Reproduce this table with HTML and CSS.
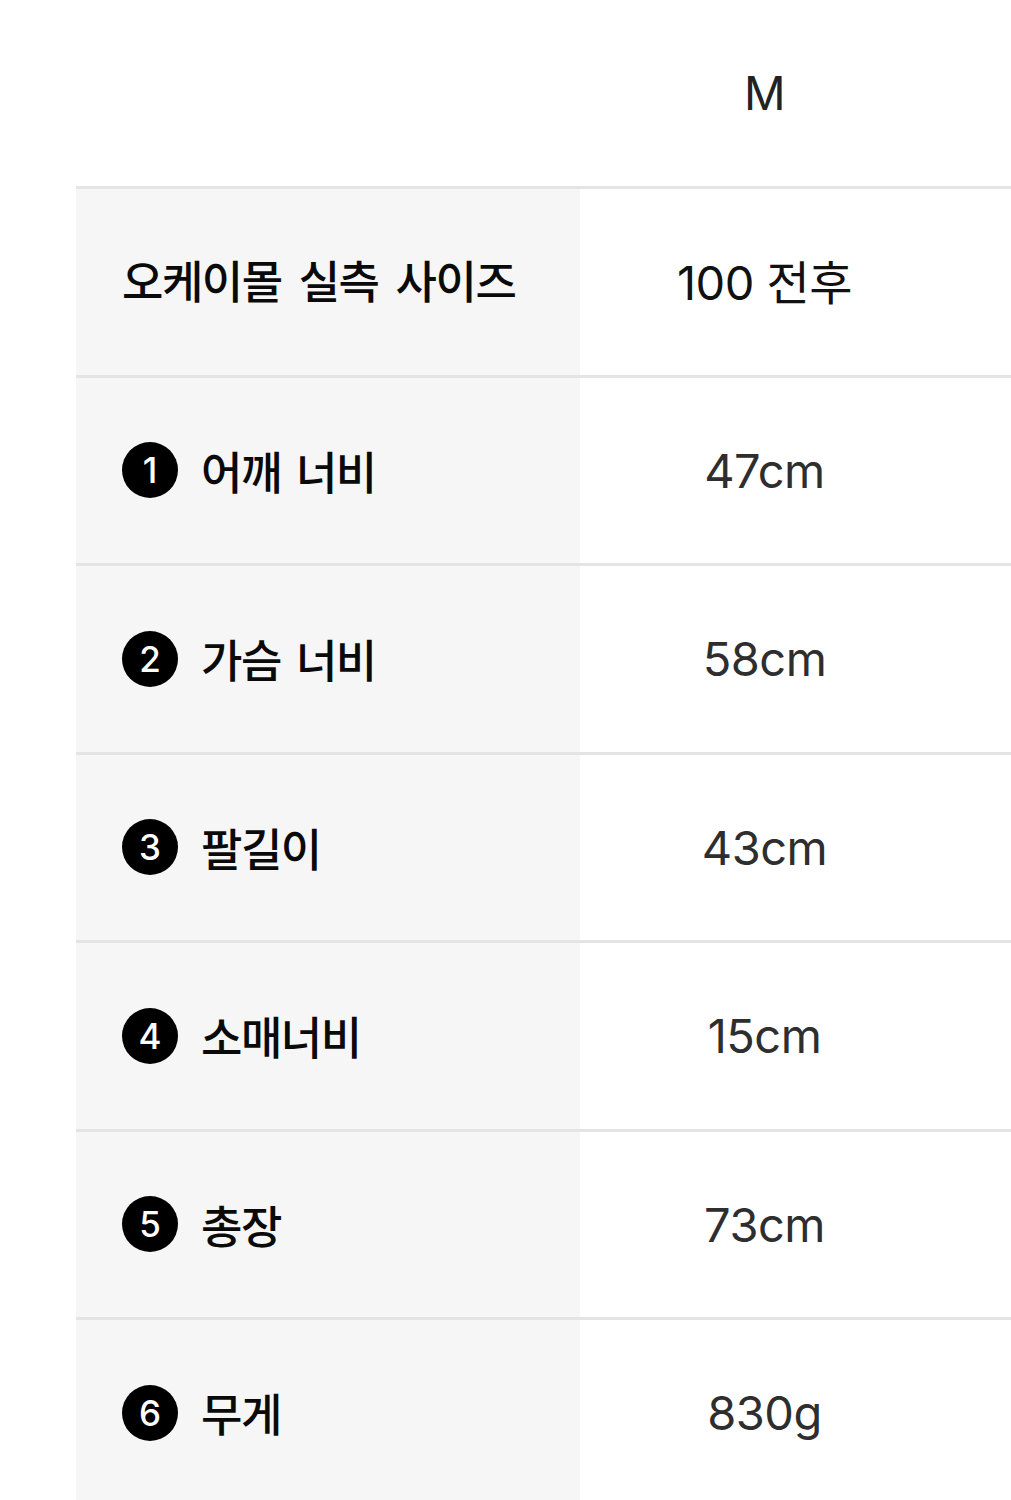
FILE: index.html
```html
<!DOCTYPE html>
<html lang="ko">
<head>
<meta charset="utf-8">
<link rel="stylesheet" href="styles.css">
</head>
<body>
<div class="table">
  <div class="row head">
    <div class="label"></div>
    <div class="value size">M</div>
  </div>
  <div class="row">
    <div class="label"><span class="title">오케이몰 실측 사이즈</span></div>
    <div class="value dark">100 전후</div>
  </div>
  <div class="row">
    <div class="label"><span class="badge">1</span><span class="text">어깨 너비</span></div>
    <div class="value">47cm</div>
  </div>
  <div class="row">
    <div class="label"><span class="badge">2</span><span class="text">가슴 너비</span></div>
    <div class="value">58cm</div>
  </div>
  <div class="row">
    <div class="label"><span class="badge">3</span><span class="text">팔길이</span></div>
    <div class="value">43cm</div>
  </div>
  <div class="row">
    <div class="label"><span class="badge">4</span><span class="text">소매너비</span></div>
    <div class="value">15cm</div>
  </div>
  <div class="row">
    <div class="label"><span class="badge">5</span><span class="text">총장</span></div>
    <div class="value">73cm</div>
  </div>
  <div class="row">
    <div class="label"><span class="badge">6</span><span class="text">무게</span></div>
    <div class="value">830g</div>
  </div>
</div>
</body>
</html>
```

FILE: styles.css
```css
html, body {
  margin: 0;
  padding: 0;
  background: #ffffff;
}
body {
  font-family: Inter, "Noto Sans CJK KR", sans-serif;
  overflow: hidden;
}
.table {
  margin-left: 76px;
  display: flex;
  flex-direction: column;
}
.row {
  display: grid;
  grid-template-columns: 504px 1fr;
  height: 185.5px;
  border-top: 3px solid #e4e4e4;
}
.row.head {
  height: 186px;
  border-top: none;
}
.label {
  background: #f6f6f6;
  display: flex;
  align-items: center;
  padding-left: 46px;
}
.head .label {
  background: #ffffff;
}
.value {
  display: flex;
  align-items: center;
  justify-content: center;
  padding-right: 62px;
  font-family: Inter, "Noto Sans CJK KR", sans-serif;
  font-size: 47px;
  color: #2e2e2e;
  letter-spacing: -0.5px;
}
.value.size {
  color: #222222;
  font-size: 46px;
}
.value.dark {
  color: #111111;
  padding-bottom: 4px;
}
.title, .text {
  font-family: "Noto Sans CJK KR", sans-serif;
  font-size: 45px;
  font-weight: 500;
  letter-spacing: -1.5px;
  word-spacing: 4px;
  color: #0a0a0a;
}
.title {
  word-spacing: 6px;
  padding-bottom: 4px;
}
.badge {
  width: 56px;
  height: 56px;
  border-radius: 50%;
  background: #000000;
  color: #ffffff;
  font-family: Inter, sans-serif;
  font-weight: 500;
  font-size: 35px;
  display: flex;
  align-items: center;
  justify-content: center;
  margin-right: 23px;
  flex: none;
}
```
